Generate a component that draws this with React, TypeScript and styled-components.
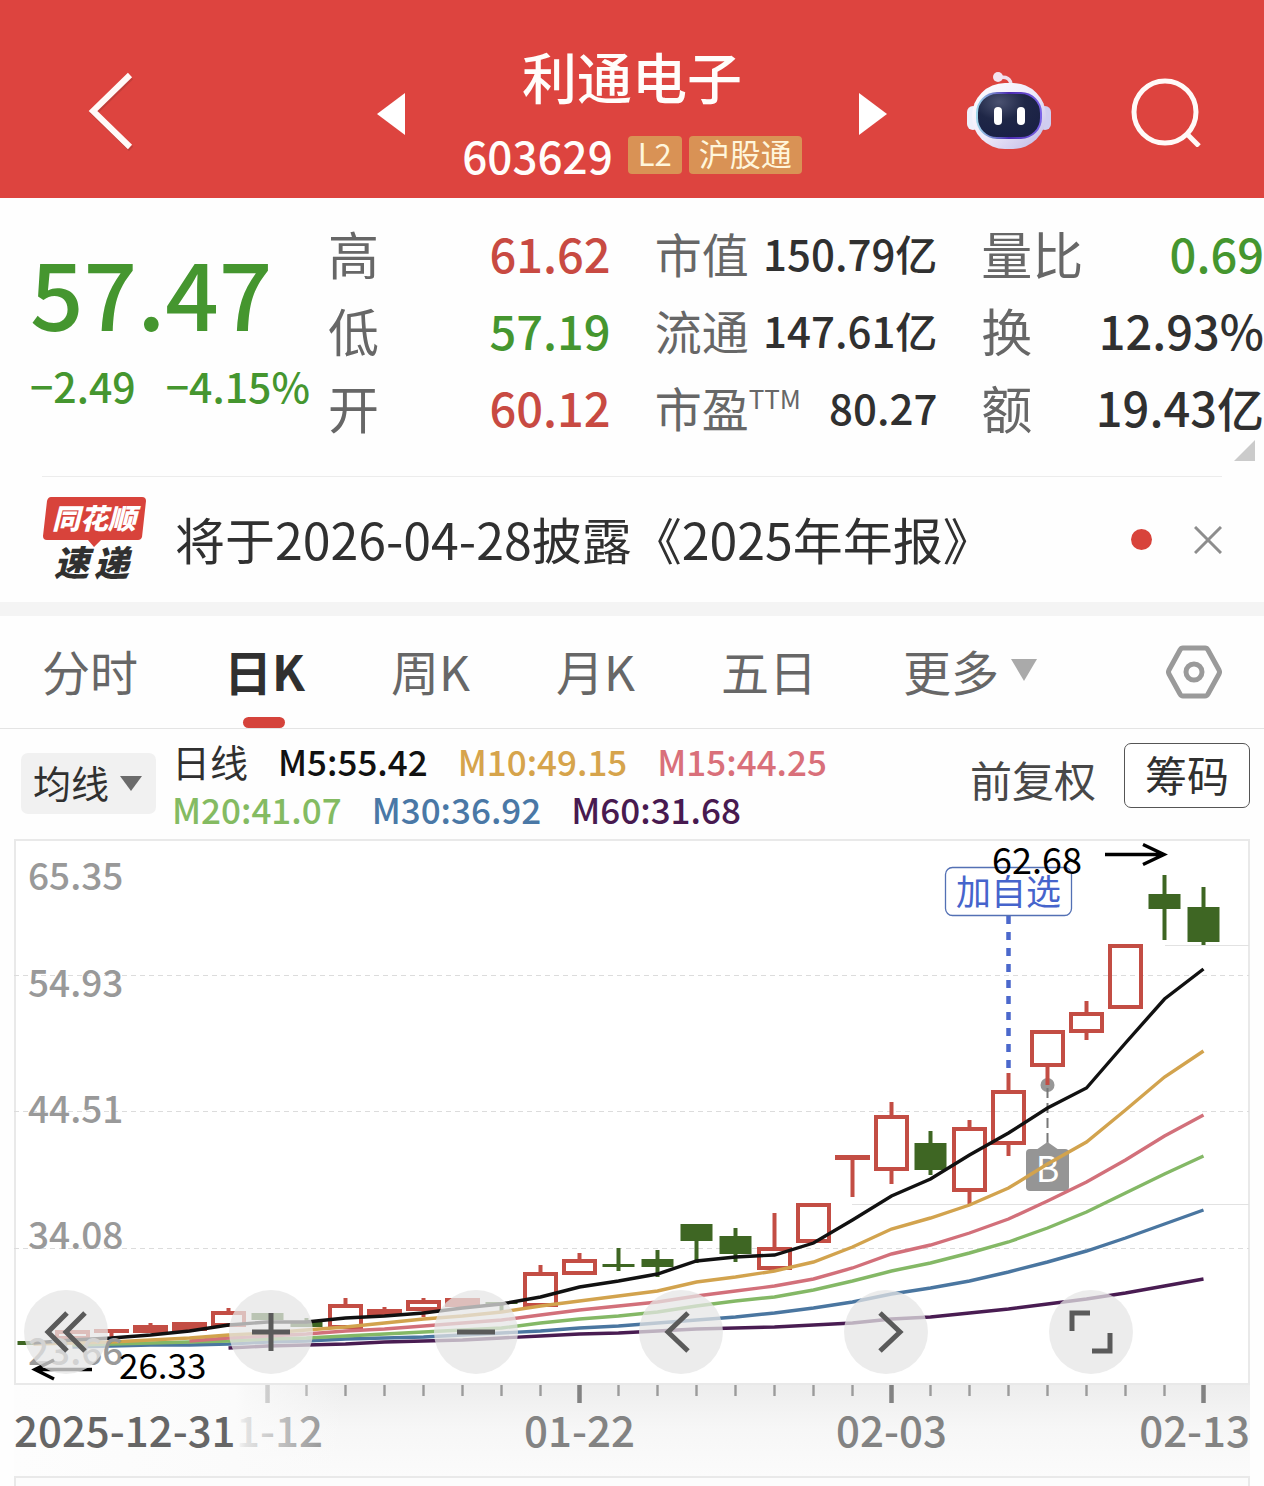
import React from "react";
import styled, { createGlobalStyle } from "styled-components";

const FONT = '"Noto Sans CJK SC", "Liberation Sans", sans-serif';
const UP = "#c84a42";
const DOWN = "#45962f";
const INK = "#303030";

const GlobalStyle = createGlobalStyle`
  * { box-sizing: border-box; }
  body { margin: 0; background: #fefefe; font-family: ${FONT}; color: ${INK}; }
  button, select { font-family: inherit; color: inherit; border: 0; padding: 0; margin: 0; background: none; cursor: pointer; }
  h1, p, dl, dd, dt, ul { margin: 0; padding: 0; font-weight: 400; }
  svg { display: block; }
`;

const Page = styled.main`
  display: flex;
  flex-direction: column;
  width: 100%;
  white-space: nowrap;
`;

/* ---------- header ---------- */

const Header = styled.header`
  display: grid;
  grid-template-columns: 1fr 510px 1fr;
  align-items: center;
  height: 198px;
  padding-top: 24px;
  background: #dd443f;
  color: #fffdfb;
`;

const HeaderSide = styled.div<{ $end?: boolean }>`
  display: flex;
  align-items: center;
  justify-content: ${(p) => (p.$end ? "flex-end" : "flex-start")};
  gap: 78px;
  padding: ${(p) => (p.$end ? "0 62px 0 0" : "0 0 0 86px")};
`;

const Switcher = styled.div`
  display: flex;
  align-items: center;
  justify-content: space-between;
`;

const StepButton = styled.button`
  padding-top: 6px;
`;

const Identity = styled.div`
  display: flex;
  flex-direction: column;
  align-items: center;
  gap: 32px;
  padding-bottom: 2px;
`;

const StockName = styled.h1`
  font-size: 55px;
  line-height: 58px;
  font-weight: 500;
`;

const CodeRow = styled.div`
  display: flex;
  align-items: center;
  height: 38px;
  gap: 7px;
`;

const Code = styled.span`
  margin-right: 8px;
  font-size: 44px;
  line-height: 36px;
  font-weight: 500;
`;

const Tag = styled.span`
  height: 38px;
  padding: 0 10px;
  border-radius: 4px;
  background: #d99255;
  color: #fff6dc;
  font-size: 31px;
  line-height: 34px;
`;

/* ---------- quote ---------- */

const Quote = styled.section`
  position: relative;
  display: grid;
  grid-template-columns: 284px repeat(3, 1fr);
  column-gap: 44px;
  padding: 16px 0 31px;
`;

const PriceBlock = styled.div`
  display: flex;
  flex-direction: column;
  gap: 19px;
  padding: 26px 0 0 30px;
  color: ${DOWN};
  font-weight: 500;
`;

const Price = styled.strong`
  font-size: 94px;
  line-height: 100px;
  font-weight: 500;
`;

const Change = styled.div`
  display: flex;
  gap: 30px;
  font-size: 41px;
  line-height: 52px;
`;

const Stats = styled.dl`
  display: flex;
  flex-direction: column;
`;

const Stat = styled.div`
  display: flex;
  align-items: center;
  justify-content: space-between;
  height: 77px;
`;

const StatLabel = styled.dt<{ $small?: boolean }>`
  display: flex;
  align-items: center;
  color: #676767;
  font-size: ${(p) => (p.$small ? 47 : 51)}px;
  line-height: 60px;
`;

const Ttm = styled.span`
  align-self: flex-start;
  font-size: 26px;
  line-height: 42px;
`;

const StatValue = styled.dd<{ $tone?: string; $small?: boolean }>`
  color: ${(p) => p.$tone || INK};
  font-size: ${(p) => (p.$small ? 42 : 47)}px;
  line-height: 60px;
  font-weight: 500;
`;

const Corner = styled.span`
  position: absolute;
  right: 9px;
  bottom: 15px;
  border-left: 21px solid transparent;
  border-bottom: 21px solid #cbcbcb;
`;

/* ---------- news ---------- */

const News = styled.section`
  display: flex;
  align-items: center;
  height: 126px;
  margin: 0 42px;
  border-top: 1px solid #ececec;
`;

const NewsLink = styled.a`
  flex: 1;
  margin-left: 27px;
  padding-bottom: 4px;
  color: ${INK};
  font-size: 50px;
  line-height: 60px;
  text-decoration: none;
`;

const Dot = styled.span`
  width: 21px;
  height: 21px;
  margin-right: 42px;
  border-radius: 50%;
  background: #d8433b;
`;

const Band = styled.div`
  height: 14px;
  background: #f4f4f4;
`;

/* ---------- tabs ---------- */

const Tabs = styled.nav`
  display: flex;
  align-items: stretch;
  gap: 86px;
  height: 113px;
  padding: 0 42px;
  border-bottom: 1px solid #e4e4e4;
`;

const Tab = styled.button<{ $active?: boolean }>`
  position: relative;
  display: flex;
  align-items: center;
  gap: 12px;
  padding-bottom: 5px;
  color: ${(p) => (p.$active ? INK : "#676767")};
  font-size: 48px;
  line-height: 60px;
  font-weight: ${(p) => (p.$active ? 700 : 400)};

  &::after {
    content: "";
    display: ${(p) => (p.$active ? "block" : "none")};
    position: absolute;
    left: 50%;
    bottom: 0;
    width: 42px;
    height: 11px;
    margin-left: -21px;
    border-radius: 6px;
    background: #d5433b;
  }
`;

const SettingsButton = styled.button`
  margin-left: auto;
`;

/* ---------- indicators ---------- */

const Indicators = styled.section`
  display: flex;
  align-items: flex-start;
  height: 110px;
  padding: 14px 14px 0 21px;
`;

const SelectBox = styled.label`
  position: relative;
  display: flex;
  align-items: center;
  height: 61px;
  margin-top: 10px;
  border-radius: 7px;
  background: #f1f1f1;

  svg {
    position: absolute;
    right: 14px;
    pointer-events: none;
  }
`;

const Select = styled.select`
  appearance: none;
  width: 135px;
  height: 61px;
  padding: 0 0 4px 12px;
  font-size: 38px;
  line-height: 57px;
`;

const Averages = styled.div`
  flex: 1;
  margin-left: 16px;
  margin-top: -6px;
`;

const AverageRow = styled.div`
  display: flex;
  gap: 30px;
  font-size: 35px;
  line-height: 48px;
`;

const Average = styled.span<{ $color: string; $title?: boolean }>`
  color: ${(p) => p.$color};
  font-size: ${(p) => (p.$title ? 38 : 35)}px;
  font-weight: ${(p) => (p.$title ? 400 : 500)};
`;

const AdjustButton = styled.button`
  margin: 6px 28px 0 0;
  color: #484848;
  font-size: 42px;
  line-height: 60px;
`;

const ChipsButton = styled.button`
  width: 126px;
  height: 65px;
  padding-bottom: 4px;
  border: 1px solid #555;
  border-radius: 7px;
  background: #fff;
  font-size: 42px;
  line-height: 56px;
`;

/* ---------- chart ---------- */

const ChartArea = styled.section`
  position: relative;
`;

const ChartSvg = styled.svg`
  width: 100%;
  height: auto;
  overflow: visible;
  font-family: ${FONT};
`;

const Controls = styled.div`
  position: absolute;
  top: 451px;
  left: 24px;
  right: 131px;
  display: flex;
  justify-content: space-between;
`;

const RoundButton = styled.button`
  width: 84px;
  height: 84px;
  border-radius: 50%;
  background: rgba(230, 230, 230, 0.74);

  svg {
    fill: none;
    stroke: #5a5a5a;
    stroke-width: 5;
  }
`;

const NextPanel = styled.section`
  height: 10px;
  margin: 0 14px;
  border: 2px solid #e9e9e9;
  border-bottom: 0;
  background: #fcfcfc;
`;

type Candle = { up: boolean; top: number; bottom: number; high?: number; low?: number };

const c = (up: boolean, top: number, bottom: number, high?: number, low?: number): Candle => ({ up, top, bottom, high, low });

const CANDLES: Candle[] = [
  c(false, 1341, 1345),
  c(true, 1330, 1340),
  c(true, 1329, 1333, undefined, 1338),
  c(true, 1325, 1333, 1323),
  c(true, 1322, 1331),
  c(true, 1311, 1327, 1308),
  c(false, 1313, 1320),
  c(false, 1322, 1327, 1318),
  c(true, 1304, 1329, 1298),
  c(true, 1309, 1316, 1307),
  c(true, 1300, 1311, 1298, 1317),
  c(true, 1298, 1307),
  c(false, 1302, 1304, undefined, 1311),
  c(true, 1272, 1307, 1265),
  c(true, 1259, 1275, 1253),
  c(false, 1264, 1267, 1248, 1271),
  c(false, 1259, 1267, 1250, 1277),
  c(false, 1224, 1241, undefined, 1263),
  c(false, 1236, 1254, 1228, 1262),
  c(true, 1247, 1270, 1213),
  c(true, 1203, 1243),
  c(true, 1155, 1160, undefined, 1197),
  c(true, 1115, 1171, 1102, 1184),
  c(false, 1143, 1170, 1131, 1175),
  c(true, 1127, 1192, 1120, 1204),
  c(true, 1090, 1145, 1073, 1156),
  c(true, 1030, 1067, undefined, 1085),
  c(true, 1012, 1033, 1001, 1040),
  c(true, 944, 1009),
  c(false, 894, 909, 875, 940),
  c(false, 907, 942, 887, 945),
];

const LINES: { color: string; start: number; ys: number[] }[] = [
  { color: "#491c52", start: 5, ys: [1348, 1346, 1345, 1344, 1342, 1341, 1340, 1338, 1336, 1334, 1333, 1331, 1329, 1328, 1327, 1325, 1323, 1319, 1317, 1313, 1309, 1304, 1299, 1293, 1286, 1279] },
  { color: "#4a76a0", start: 1, ys: [1347, 1346, 1345, 1345, 1344, 1342, 1341, 1339, 1338, 1337, 1335, 1333, 1331, 1328, 1326, 1323, 1320, 1317, 1313, 1308, 1302, 1294, 1288, 1281, 1272, 1262, 1251, 1238, 1224, 1210] },
  { color: "#84b866", start: 1, ys: [1345, 1344, 1343, 1342, 1341, 1339, 1338, 1336, 1334, 1332, 1330, 1328, 1323, 1319, 1316, 1312, 1306, 1301, 1297, 1290, 1281, 1271, 1263, 1253, 1242, 1228, 1212, 1193, 1174, 1156] },
  { color: "#d2707a", start: 4, ys: [1341, 1338, 1336, 1334, 1331, 1329, 1326, 1323, 1320, 1315, 1310, 1306, 1302, 1296, 1291, 1286, 1279, 1268, 1254, 1245, 1233, 1219, 1201, 1182, 1160, 1136, 1115] },
  { color: "#d2a34e", start: 0, ys: [1344, 1343, 1342, 1340, 1338, 1335, 1333, 1330, 1327, 1323, 1319, 1316, 1312, 1306, 1301, 1296, 1291, 1282, 1277, 1271, 1262, 1247, 1229, 1218, 1205, 1188, 1164, 1142, 1110, 1077, 1051] },
  { color: "#111", start: 0, ys: [1343, 1340, 1338, 1335, 1331, 1325, 1322, 1322, 1318, 1316, 1313, 1308, 1304, 1297, 1287, 1281, 1274, 1261, 1257, 1255, 1243, 1220, 1196, 1179, 1155, 1133, 1108, 1088, 1043, 999, 969] },
];

const SCALE = [
  { y: 890, label: "65.35" },
  { y: 997, label: "54.93" },
  { y: 1123, label: "44.51" },
  { y: 1249, label: "34.08" },
  { y: 1365, label: "23.66" },
];

const xAt = (i: number) => 33.5 + 39 * i;

function CandleShape({ candle, index }: { candle: Candle; index: number }) {
  const x = xAt(index);
  const color = candle.up ? "#c34d44" : "#3e6623";
  const height = candle.bottom - candle.top;
  return (
    <g stroke={color} strokeWidth={4}>
      {candle.high !== undefined && <line x1={x} x2={x} y1={candle.high} y2={candle.top + 1} />}
      {candle.low !== undefined && <line x1={x} x2={x} y1={candle.bottom - 1} y2={candle.low} />}
      {candle.up && height > 9 ? (
        <rect x={x - 15.5} y={candle.top + 2} width={31} height={height - 4} fill="none" />
      ) : (
        <rect x={x - (candle.up ? 17.5 : 16)} y={candle.top} width={candle.up ? 35 : 32} height={height} fill={color} stroke="none" />
      )}
    </g>
  );
}

function Chart() {
  return (
    <ChartSvg viewBox="0 839 1264 637" role="img" aria-label="日K">
      <defs>
        <linearGradient id="axisShade" x1="0" y1="0" x2="0" y2="1">
          <stop offset="0" stopColor="#ededed" />
          <stop offset="0.5" stopColor="#f7f7f7" />
          <stop offset="1" stopColor="#fbfbfb" />
        </linearGradient>
        <linearGradient id="axisFade" gradientUnits="userSpaceOnUse" x1="14" y1="0" x2="345" y2="0">
          <stop offset="0" stopColor="#fdfdfd" />
          <stop offset="0.67" stopColor="#fbfbfb" />
          <stop offset="0.7" stopColor="#fbfbfb" stopOpacity="0.8" />
          <stop offset="1" stopColor="#fbfbfb" stopOpacity="0" />
        </linearGradient>
      </defs>

      <rect x="14" y="1384" width="1236" height="92" fill="url(#axisShade)" />
      <rect x="15" y="840" width="1234" height="544" fill="#fff" stroke="#e9e9e9" strokeWidth="2" />
      {[975.5, 1111.5, 1248.5].map((y) => (
        <line key={y} x1="14" x2="1249" y1={y} y2={y} stroke="#dcdcdc" strokeDasharray="5 4" />
      ))}
      <path d="M1165 945.5H1249M852 1204.5H1249" stroke="#e2e2e2" />

      {CANDLES.map((candle, i) => i !== 26 && <CandleShape key={i} candle={candle} index={i} />)}

      <g>
        <circle cx="1047.5" cy="1085" r="7" fill="#979797" />
        <line x1="1047.5" x2="1047.5" y1="1088" y2="1144" stroke="#777" strokeWidth="2" strokeDasharray="10 5" />
        <path d="M1036 1150L1047.5 1142L1059 1150Z" fill="#959595" />
        <rect x="1026" y="1149" width="43" height="42" rx="4" fill="#959595" />
        <text x="1047.5" y="1182" textAnchor="middle" fontSize="36" fill="#fff">B</text>
      </g>
      <CandleShape candle={CANDLES[26]} index={26} />

      {LINES.map((line) => (
        <polyline
          key={line.color}
          points={line.ys.map((y, k) => `${xAt(line.start + k)},${y}`).join(" ")}
          fill="none"
          stroke={line.color}
          strokeWidth="3.4"
        />
      ))}

      {SCALE.map((s) => (
        <text key={s.label} x="28" y={s.y} fontSize="37" fontWeight="500" fill="#999">{s.label}</text>
      ))}

      <line x1="1008.5" x2="1008.5" y1="916" y2="1070" stroke="#4b68cc" strokeWidth="4.5" strokeDasharray="8 8" />
      <rect x="945.5" y="867.5" width="126" height="48" rx="7" fill="#fff" stroke="#5370b4" strokeWidth="1.3" />
      <text x="1008.5" y="905" textAnchor="middle" fontSize="35" fill="#4664cc">加自选</text>
      <text x="992" y="874" fontSize="36" fill="#000">62.68</text>
      <path d="M1105 854.5H1164M1143 844.5L1164 854.5L1143 864.5" fill="none" stroke="#000" strokeWidth="3.4" />
      <text x="119" y="1379" fontSize="35" fill="#000">26.33</text>
      <path d="M92 1369.5H35M54 1360L35 1369.5L54 1379" fill="none" stroke="#000" strokeWidth="3.4" />

      {CANDLES.map((_, i) => {
        if (i < 6) return null;
        const major = (i - 6) % 8 === 0;
        return (
          <line
            key={i}
            x1={xAt(i)}
            x2={xAt(i)}
            y1="1385"
            y2={major ? 1403 : 1396}
            stroke={major ? "#828282" : "#9b9b9b"}
            strokeWidth={major ? 4.5 : 2.4}
          />
        );
      })}
      <g fontSize="42" fontWeight="500" fill="#838383">
        <text x="267.5" y="1447" textAnchor="middle">01-12</text>
        <text x="579.5" y="1447" textAnchor="middle">01-22</text>
        <text x="891.5" y="1447" textAnchor="middle">02-03</text>
        <text x="1250" y="1447" textAnchor="end">02-13</text>
      </g>
      <rect x="14" y="1385" width="331" height="91" fill="url(#axisFade)" />
      <text x="14" y="1447" fontSize="42" fontWeight="500" fill="#666">2025-12-31</text>
    </ChartSvg>
  );
}

/* ---------- drawings ---------- */

const Robot = () => (
  <svg width="86" height="80" viewBox="0 0 86 80" aria-hidden="true">
    <defs>
      <linearGradient id="shell" x1="0" y1="0" x2="1" y2="1">
        <stop offset="0" stopColor="#fff" />
        <stop offset="0.5" stopColor="#eeeafa" />
        <stop offset="1" stopColor="#bdb6e4" />
      </linearGradient>
      <linearGradient id="rim" x1="0" y1="0" x2="1" y2="0">
        <stop offset="0" stopColor="#9fd6ea" />
        <stop offset="0.5" stopColor="#4a2ab0" />
        <stop offset="1" stopColor="#7a63e6" />
      </linearGradient>
      <radialGradient id="visor" cx="0.35" cy="0.2" r="0.8">
        <stop offset="0" stopColor="#4a5170" />
        <stop offset="0.5" stopColor="#1f2747" />
        <stop offset="1" stopColor="#1a2145" />
      </radialGradient>
    </defs>
    <path d="M32 7Q45 4 45 15" fill="none" stroke="#f0dfec" strokeWidth="3.5" />
    <circle cx="32" cy="6" r="5" fill="#f3e4f0" />
    <rect x="1" y="35" width="12" height="24" rx="6" fill="#eef0fb" />
    <rect x="73" y="35" width="12" height="24" rx="6" fill="#cfcdf0" />
    <rect x="6" y="12" width="74" height="66" rx="33" fill="url(#shell)" />
    <rect x="11" y="22" width="64" height="45" rx="20" fill="url(#visor)" stroke="url(#rim)" strokeWidth="2" />
    <rect x="28" y="36" width="8" height="18" rx="4" fill="#fff" />
    <rect x="51" y="36" width="8" height="18" rx="4" fill="#fff" />
  </svg>
);

const LogoSvg = styled.svg`
  overflow: visible;
`;

const BrandLogo = () => (
  <LogoSvg width="106" height="86" viewBox="0 0 106 86" role="img" aria-label="同花顺速递" fontFamily={FONT}>
    <path d="M9 0H100Q104 0 104 4L100 40Q99 43 96 43H59L52 50L46 43H5Q1 43 1 39L5 4Q6 0 9 0Z" fill="#d8433b" />
    <text x="52" y="32" textAnchor="middle" fontSize="28" fontWeight="900" fontStyle="italic" fill="#fff">同花顺</text>
    <g fontSize="35" fontWeight="900" fontStyle="italic" fill={INK}>
      <text x="12" y="79">速</text>
      <text x="52" y="79">递</text>
    </g>
  </LogoSvg>
);

const ICONS: { name: string; path: string }[] = [
  { name: "最早", path: "M43 23L24 42L43 61M61 23L42 42L61 61" },
  { name: "放大", path: "M42 23V61M23 42H61" },
  { name: "缩小", path: "M23 42H61" },
  { name: "向左", path: "M49 23L29 42L49 61" },
  { name: "向右", path: "M36 23L56 42L36 61" },
  { name: "全屏", path: "M23 41V23H41M61 43V61H43" },
];

const Caret = ({ width, height, color }: { width: number; height: number; color: string }) => (
  <svg width={width} height={height} viewBox="0 0 10 10" preserveAspectRatio="none" aria-hidden="true">
    <path d="M0 0H10L5 10Z" fill={color} />
  </svg>
);

export default function App() {
  return (
    <>
      <GlobalStyle />
      <Page>
        <Header>
          <HeaderSide>
            <button aria-label="返回">
              <svg width="48" height="80" viewBox="0 0 48 80" fill="none">
                <path d="M44 5L7 41L44 77" transform="translate(1 1)" stroke="#a53834" strokeWidth="6" opacity="0.5" />
                <path d="M44 4L7 40L44 76" stroke="#fffaf8" strokeWidth="6" />
              </svg>
            </button>
          </HeaderSide>
          <Switcher>
            <StepButton aria-label="上一只">
              <svg width="28" height="42" viewBox="0 0 28 42"><path d="M28 0V42L0 21Z" fill="#fff" /></svg>
            </StepButton>
            <Identity>
              <StockName>利通电子</StockName>
              <CodeRow>
                <Code>603629</Code>
                <Tag>L2</Tag>
                <Tag>沪股通</Tag>
              </CodeRow>
            </Identity>
            <StepButton aria-label="下一只">
              <svg width="28" height="42" viewBox="0 0 28 42"><path d="M0 0V42L28 21Z" fill="#fff" /></svg>
            </StepButton>
          </Switcher>
          <HeaderSide $end>
            <button aria-label="助手"><Robot /></button>
            <button aria-label="搜索">
              <svg width="72" height="72" viewBox="0 0 72 72" fill="none" stroke="#fffaf8" strokeWidth="5">
                <circle cx="35" cy="37" r="31" />
                <path d="M57 59L69 71" />
              </svg>
            </button>
          </HeaderSide>
        </Header>

        <Quote>
          <PriceBlock>
            <Price>57.47</Price>
            <Change><span>−2.49</span><span>−4.15%</span></Change>
          </PriceBlock>
          <Stats>
            <Stat><StatLabel>高</StatLabel><StatValue $tone={UP}>61.62</StatValue></Stat>
            <Stat><StatLabel>低</StatLabel><StatValue $tone={DOWN}>57.19</StatValue></Stat>
            <Stat><StatLabel>开</StatLabel><StatValue $tone={UP}>60.12</StatValue></Stat>
          </Stats>
          <Stats>
            <Stat><StatLabel $small>市值</StatLabel><StatValue $small>150.79亿</StatValue></Stat>
            <Stat><StatLabel $small>流通</StatLabel><StatValue $small>147.61亿</StatValue></Stat>
            <Stat><StatLabel $small>市盈<Ttm>TTM</Ttm></StatLabel><StatValue $small>80.27</StatValue></Stat>
          </Stats>
          <Stats>
            <Stat><StatLabel>量比</StatLabel><StatValue $tone={DOWN}>0.69</StatValue></Stat>
            <Stat><StatLabel>换</StatLabel><StatValue>12.93%</StatValue></Stat>
            <Stat><StatLabel>额</StatLabel><StatValue>19.43亿</StatValue></Stat>
          </Stats>
          <Corner />
        </Quote>

        <News>
          <BrandLogo />
          <NewsLink href="#news">将于2026-04-28披露《2025年年报》</NewsLink>
          <Dot />
          <button aria-label="关闭">
            <svg width="28" height="28" viewBox="0 0 28 28" stroke="#8d8d8d" strokeWidth="3"><path d="M1 1L27 27M27 1L1 27" /></svg>
          </button>
        </News>
        <Band />

        <Tabs>
          <Tab>分时</Tab>
          <Tab $active aria-current="page">日K</Tab>
          <Tab>周K</Tab>
          <Tab>月K</Tab>
          <Tab>五日</Tab>
          <Tab aria-haspopup="menu">更多<Caret width={26} height={22} color="#aaa" /></Tab>
          <SettingsButton aria-label="设置">
            <svg width="56" height="56" viewBox="0 0 56 56" fill="none" stroke="#9a9a9a" strokeWidth="5" strokeLinejoin="round">
              <path d="M17 4H39Q41 4 42 6L53 26Q54 28 53 30L42 50Q41 52 39 52H17Q15 52 14 50L3 30Q2 28 3 26L14 6Q15 4 17 4Z" />
              <circle cx="28" cy="28" r="8" />
            </svg>
          </SettingsButton>
        </Tabs>

        <Indicators>
          <SelectBox>
            <Select aria-label="指标" defaultValue="均线">
              <option>均线</option>
            </Select>
            <Caret width={22} height={15} color="#6b6b6b" />
          </SelectBox>
          <Averages>
            <AverageRow>
              <Average $color={INK} $title>日线</Average>
              <Average $color="#111">M5:55.42</Average>
              <Average $color="#d6a44c">M10:49.15</Average>
              <Average $color="#d9707a">M15:44.25</Average>
            </AverageRow>
            <AverageRow>
              <Average $color="#84bb62">M20:41.07</Average>
              <Average $color="#4a78a6">M30:36.92</Average>
              <Average $color="#481a50">M60:31.68</Average>
            </AverageRow>
          </Averages>
          <AdjustButton>前复权</AdjustButton>
          <ChipsButton>筹码</ChipsButton>
        </Indicators>

        <ChartArea>
          <Chart />
          <Controls>
            {ICONS.map((icon) => (
              <RoundButton key={icon.name} aria-label={icon.name}>
                <svg width="84" height="84" viewBox="0 0 84 84"><path d={icon.path} /></svg>
              </RoundButton>
            ))}
          </Controls>
        </ChartArea>
        <NextPanel />
      </Page>
    </>
  );
}
